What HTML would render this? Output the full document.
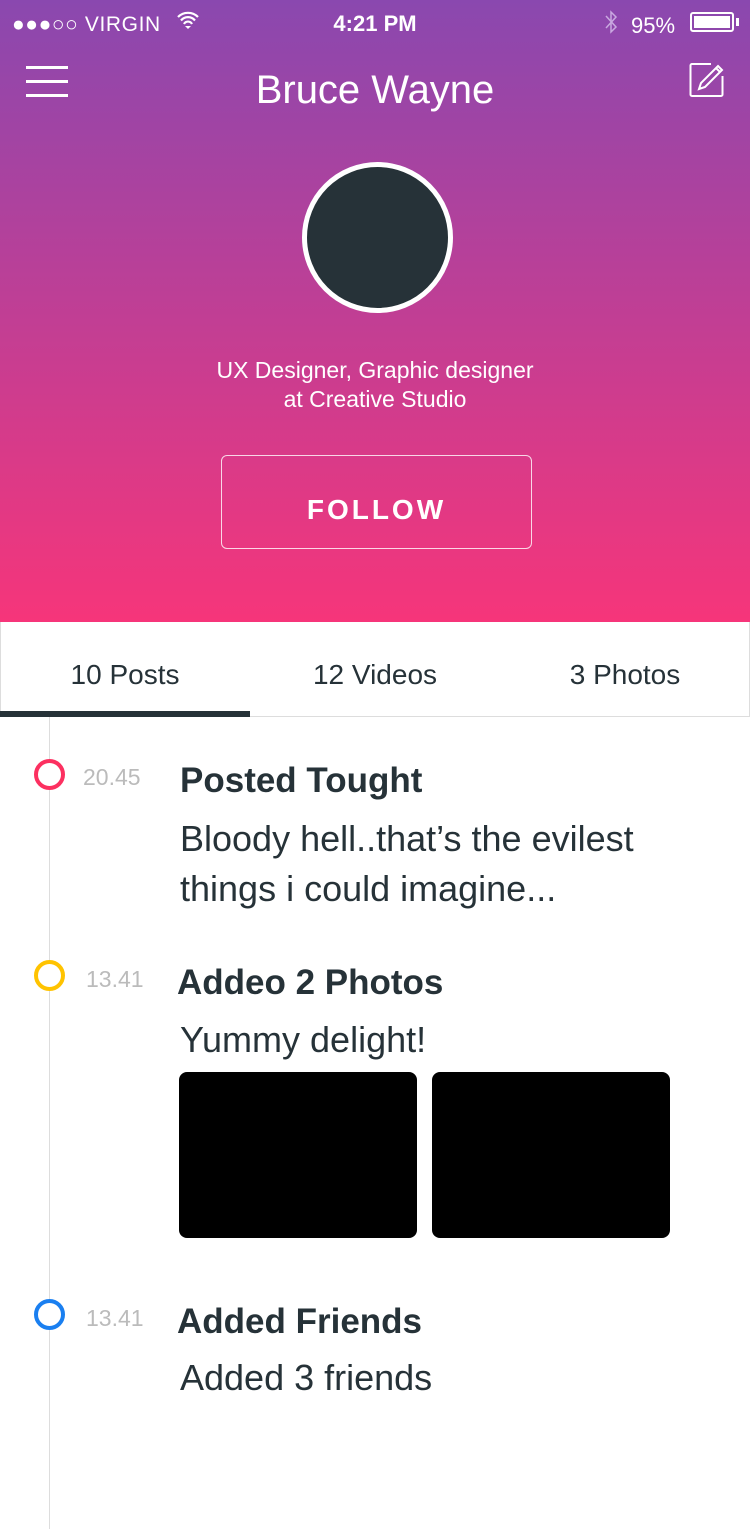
<!DOCTYPE html>
<html><head><meta charset="utf-8"><style>
*{margin:0;padding:0;box-sizing:border-box}
body{width:750px;height:1529px;background:#fff;font-family:"Liberation Sans",sans-serif;position:relative;overflow:hidden;color:#263238}
.hdr{position:absolute;left:0;top:0;width:750px;height:622px;background:linear-gradient(#8a48af,#f6357a)}
.a{position:absolute;white-space:nowrap}
.w{color:#fff}
</style></head><body>
<div class="hdr"></div>
<div class="a w" style="left:12px;top:13px;font-size:21px;letter-spacing:0.6px">●●●○○ VIRGIN</div>
<svg class="a" style="left:176px;top:10px" width="24" height="20" viewBox="0 0 24 20"><path d="M2 7a14 14 0 0 1 20 0M5 10.5a9 9 0 0 1 14 0M8 14a4.5 4.5 0 0 1 8 0" stroke="#fff" stroke-width="2.2" fill="none"/><path d="M12 19l-3-3h6z" fill="#fff"/></svg>
<div class="a w" style="left:0;width:750px;text-align:center;top:11px;font-size:22px;font-weight:bold">4:21 PM</div>
<svg class="a" style="left:603px;top:9px" width="16" height="26" viewBox="0 0 16 26"><path d="M3 7l10 11-5 5V3l5 5L3 19" stroke="#c9a9e0" stroke-width="1.5" fill="none"/></svg>
<div class="a w" style="left:631px;top:13px;font-size:22px">95%</div>
<div class="a" style="left:690px;top:12px;width:44px;height:20px;border:2px solid #fff;border-radius:3px;padding:2px"><div style="background:#fff;width:100%;height:100%"></div></div>
<div class="a" style="left:736px;top:18px;width:3px;height:8px;background:#fff"></div>
<div class="a" style="left:26px;top:66px;width:42px;height:3px;background:#fff;box-shadow:0 14px 0 #fff,0 28px 0 #fff"></div>
<div class="a w" style="left:0;width:750px;text-align:center;top:68px;font-size:40px">Bruce Wayne</div>
<svg class="a" style="left:689px;top:62px" width="36" height="36" viewBox="0 0 36 36"><path d="M22 2H3a1.5 1.5 0 0 0-1.5 1.5v29A1.5 1.5 0 0 0 3 34h29a1.5 1.5 0 0 0 1.5-1.5V14" stroke="#fff" stroke-width="2" fill="none"/><path d="M29 4l4 4-17 17-6 2 2-6z M27 6l4 4" stroke="#fff" stroke-width="2" fill="none"/></svg>
<div class="a" style="left:302px;top:162px;width:151px;height:151px;border-radius:50%;background:#263238;border:5px solid #fff"></div>
<div class="a w" style="left:0;width:750px;text-align:center;top:356px;font-size:23px;line-height:29px">UX Designer, Graphic designer<br>at Creative Studio</div>
<div class="a w" style="left:221px;top:455px;width:311px;height:94px;border:1px solid rgba(255,255,255,.8);border-radius:6px;text-align:center;line-height:108px;font-size:28px;font-weight:bold;letter-spacing:3px">FOLLOW</div>
<div class="a" style="left:0;top:622px;width:750px;height:95px;border:1px solid #ddd;border-top:none"></div>
<div class="a" style="left:0;width:250px;text-align:center;top:659px;font-size:28px">10 Posts</div>
<div class="a" style="left:250px;width:250px;text-align:center;top:659px;font-size:28px">12 Videos</div>
<div class="a" style="left:500px;width:250px;text-align:center;top:659px;font-size:28px">3 Photos</div>
<div class="a" style="left:0;top:711px;width:250px;height:6px;background:#263238"></div>
<div class="a" style="left:49px;top:717px;width:1px;height:812px;background:#ddd"></div>
<div class="a" style="left:34px;top:759px;width:31px;height:31px;border-radius:50%;border:4px solid #fc3060;background:#fff"></div>
<div class="a" style="left:83px;top:764px;font-size:23px;color:#bbb">20.45</div>
<div class="a" style="left:180px;top:761px;font-size:35px;font-weight:bold">Posted Tought</div>
<div class="a" style="left:180px;top:814px;font-size:36px;line-height:50px">Bloody hell..that’s the evilest<br>things i could imagine...</div>
<div class="a" style="left:34px;top:960px;width:31px;height:31px;border-radius:50%;border:4px solid #ffc300;background:#fff"></div>
<div class="a" style="left:86px;top:966px;font-size:23px;color:#bbb">13.41</div>
<div class="a" style="left:177px;top:963px;font-size:35px;font-weight:bold">Addeo 2 Photos</div>
<div class="a" style="left:180px;top:1019px;font-size:36px">Yummy delight!</div>
<div class="a" style="left:179px;top:1072px;width:238px;height:166px;background:#000;border-radius:8px"></div>
<div class="a" style="left:432px;top:1072px;width:238px;height:166px;background:#000;border-radius:8px"></div>
<div class="a" style="left:34px;top:1299px;width:31px;height:31px;border-radius:50%;border:4px solid #1a7ff0;background:#fff"></div>
<div class="a" style="left:86px;top:1305px;font-size:23px;color:#bbb">13.41</div>
<div class="a" style="left:177px;top:1302px;font-size:35px;font-weight:bold">Added Friends</div>
<div class="a" style="left:180px;top:1357px;font-size:36px">Added 3 friends</div>
</body></html>
